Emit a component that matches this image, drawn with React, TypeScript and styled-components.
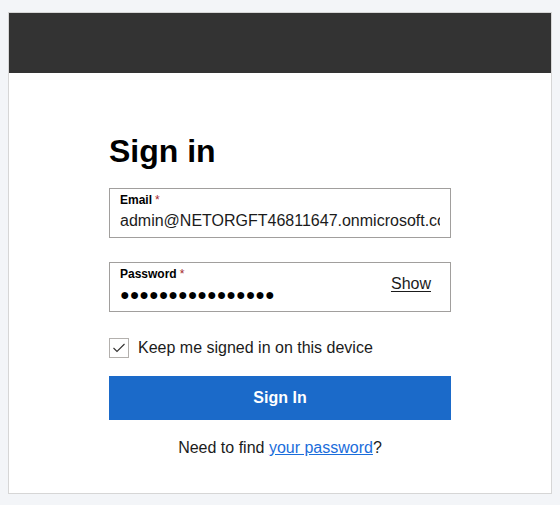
import React from "react";
import styled, { createGlobalStyle } from "styled-components";

const GlobalStyle = createGlobalStyle`
  html, body {
    margin: 0;
    padding: 0;
    background: #f3f5f8;
    font-family: "Liberation Sans", Arial, sans-serif;
    color: #1b1b1b;
  }
  * { box-sizing: border-box; }
`;

const Page = styled.div`
  padding: 12px 8px 11px;
`;

const Card = styled.div`
  height: 482px;
  background: #ffffff;
  border: 1px solid #d6d6d6;
  display: flex;
  flex-direction: column;
`;

const Header = styled.header`
  height: 60px;
  background: #333333;
  flex-shrink: 0;
`;

const Content = styled.main`
  width: 342px;
  margin: 0 auto;
  display: flex;
  flex-direction: column;
`;

const Title = styled.h1`
  margin: 60px 0 0;
  font-size: 32px;
  line-height: 37px;
  font-weight: 700;
  color: #000;
`;

const Field = styled.div<{ $gap: number }>`
  margin-top: ${(p) => p.$gap}px;
  height: 50px;
  border: 1px solid #a19f9d;
  padding: 4px 10px 0;
  display: flex;
  align-items: flex-start;
`;

const FieldBody = styled.div`
  flex: 1;
  min-width: 0;
  display: flex;
  flex-direction: column;
`;

const Label = styled.label`
  font-size: 12px;
  line-height: 14px;
  font-weight: 700;
  color: #000;
`;

const Required = styled.span`
  color: #a4262c;
  font-weight: 400;
  margin-left: 3px;
`;

const TextInput = styled.input`
  margin-top: 4px;
  width: 100%;
  height: 20px;
  padding: 0;
  border: none;
  outline: none;
  background: transparent;
  font-family: "Liberation Sans", Arial, sans-serif;
  font-size: 16px;
  line-height: 20px;
  color: #1b1b1b;
`;

const Dots = styled.span`
  margin-top: 4px;
  height: 20px;
  font-size: 16px;
  line-height: 20px;
  color: #000;
  white-space: nowrap;
`;

const ShowButton = styled.button`
  margin: 7px 9px 0 0;
  padding: 0;
  border: none;
  background: none;
  font-family: "Liberation Sans", Arial, sans-serif;
  font-size: 16px;
  line-height: 20px;
  color: #1b1b1b;
  text-decoration: underline;
  text-underline-offset: 2px;
  cursor: pointer;
`;

const CheckRow = styled.label`
  margin-top: 26px;
  display: flex;
  align-items: center;
  gap: 9px;
  font-size: 16px;
  line-height: 20px;
  color: #1b1b1b;
`;

const CheckBox = styled.span`
  width: 20px;
  height: 20px;
  border: 1px solid #b3b0ad;
  display: flex;
  align-items: center;
  justify-content: center;
`;

const SubmitButton = styled.button`
  margin-top: 18px;
  height: 44px;
  width: 100%;
  border: none;
  background: #1b6ac9;
  color: #fff;
  font-family: "Liberation Sans", Arial, sans-serif;
  font-size: 16px;
  font-weight: 700;
  cursor: pointer;
`;

const Footer = styled.p`
  margin: 18px 0 0;
  text-align: center;
  font-size: 16px;
  line-height: 20px;
  color: #1b1b1b;
`;

const Link = styled.a`
  color: #1a6ddb;
  text-decoration: underline;
`;

export default function App() {
  return (
    <>
      <GlobalStyle />
      <Page>
        <Card>
          <Header />
          <Content>
            <Title>Sign in</Title>
            <Field $gap={18}>
              <FieldBody>
                <Label>
                  Email<Required>*</Required>
                </Label>
                <TextInput readOnly value="admin@NETORGFT46811647.onmicrosoft.com" />
              </FieldBody>
            </Field>
            <Field $gap={24}>
              <FieldBody>
                <Label>
                  Password<Required>*</Required>
                </Label>
                <Dots>{"●".repeat(16)}</Dots>
              </FieldBody>
              <ShowButton type="button">Show</ShowButton>
            </Field>
            <CheckRow>
              <CheckBox>
                <svg width="14" height="12" viewBox="0 0 14 12">
                  <polyline points="1.5,6 5,9.5 12.5,2" fill="none" stroke="#323130" strokeWidth="1.1" />
                </svg>
              </CheckBox>
              Keep me signed in on this device
            </CheckRow>
            <SubmitButton type="button">Sign In</SubmitButton>
            <Footer>
              Need to find <Link href="#">your password</Link>?
            </Footer>
          </Content>
        </Card>
      </Page>
    </>
  );
}
